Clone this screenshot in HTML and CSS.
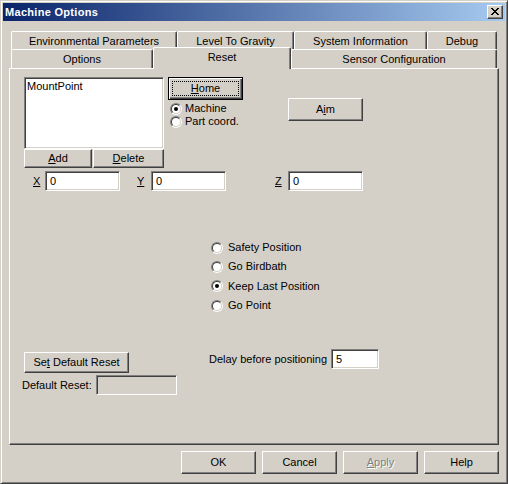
FILE: index.html
```html
<!DOCTYPE html>
<html>
<head>
<meta charset="utf-8">
<title>Machine Options</title>
<link rel="stylesheet" href="styles.css">
</head>
<body>
<div class="window">
  <div class="titlebar">
    <span class="title">Machine Options</span>
    <span class="close"><svg width="8" height="7" viewBox="0 0 8 7" shape-rendering="crispEdges"><path d="M0 0h2v1H0zM6 0h2v1H6zM1 1h2v1H1zM5 1h2v1H5zM2 2h4v1H2zM3 3h2v1H3zM2 4h4v1H2zM1 5h2v1H1zM5 5h2v1H5zM0 6h2v1H0zM6 6h2v1H6z" fill="#000"/></svg></span>
  </div>

  <div class="tabs">
    <div class="tabrow back">
      <div class="tab t-env">Environmental Parameters</div>
      <div class="tab t-level">Level To Gravity</div>
      <div class="tab t-sys">System Information</div>
      <div class="tab t-debug">Debug</div>
    </div>
    <div class="tabrow front">
      <div class="tab t-opt">Options</div>
      <div class="tab sel t-reset">Reset</div>
      <div class="tab t-sensor">Sensor Configuration</div>
    </div>
  </div>

  <div class="panel">
    <div class="top">
      <div class="col-list">
        <div class="listbox"><div class="item">MountPoint</div></div>
        <div class="listbtns">
          <button class="btn add"><span><u>A</u>dd</span></button>
          <button class="btn del"><span><u>D</u>elete</span></button>
        </div>
      </div>
      <div class="col-home">
        <button class="btn default home"><span class="focus"><span><u>H</u>ome</span></span></button>
        <div class="coord">
          <div class="crow"><span class="radio on"><i></i></span><span>Machine</span></div>
          <div class="crow"><span class="radio"><i></i></span><span>Part coord.</span></div>
        </div>
      </div>
      <div class="col-aim">
        <button class="btn aim"><span>A<u>i</u>m</span></button>
      </div>
    </div>

    <div class="xyz">
      <span class="lbl lbl-x"><u>X</u></span><input class="field fxyz" type="text" value="0">
      <span class="lbl lbl-y"><u>Y</u></span><input class="field fxyz" type="text" value="0">
      <span class="lbl lbl-z"><u>Z</u></span><input class="field fxyz" type="text" value="0">
    </div>

    <div class="positions">
      <div class="prow"><span class="radio"><i></i></span><span>Safety Position</span></div>
      <div class="prow"><span class="radio"><i></i></span><span>Go Birdbath</span></div>
      <div class="prow"><span class="radio on"><i></i></span><span>Keep Last Position</span></div>
      <div class="prow"><span class="radio"><i></i></span><span>Go Point</span></div>
    </div>

    <div class="bottom">
      <div class="bleft">
        <button class="btn sdr"><span>Se<u>t</u> Default Reset</span></button>
        <div class="drrow">
          <span class="drlbl">Default Reset:</span>
          <input class="field drfield" type="text" value="" disabled>
        </div>
      </div>
      <div class="delay">
        <span class="delaylbl">Delay before positioning</span>
        <input class="field delayfield" type="text" value="5">
      </div>
    </div>
  </div>

  <div class="actions">
    <button class="btn act"><span>OK</span></button>
    <button class="btn act"><span>Cancel</span></button>
    <button class="btn act disabled"><span><u>A</u>pply</span></button>
    <button class="btn act"><span>Help</span></button>
  </div>
</div>
</body>
</html>
```
FILE: styles.css
```css
html, body {
  margin: 0;
  padding: 0;
}
body {
  background: #d4d0c8;
  font-family: "Liberation Sans", Arial, sans-serif;
  font-size: 11px;
  line-height: 13px;
  color: #000;
}

.window {
  width: 508px;
  height: 484px;
  box-sizing: border-box;
  border: 1px solid;
  border-color: #d4d0c8 #404040 #404040 #d4d0c8;
  box-shadow: inset 1px 1px #fff, inset -1px -1px #808080;
  padding: 2px;
  background: #d4d0c8;
}

.titlebar {
  height: 18px;
  background: linear-gradient(90deg, #0a246a, #a6caf0);
  display: flex;
  align-items: center;
  justify-content: space-between;
  padding: 0 2px 0 2px;
}
.title {
  color: #fff;
  font-weight: bold;
  font-size: 11px;
  letter-spacing: 0.3px;
}
.close {
  width: 16px;
  height: 14px;
  box-sizing: border-box;
  border: 1px solid;
  border-color: #fff #404040 #404040 #fff;
  box-shadow: inset -1px -1px #808080;
  background: #d4d0c8;
  display: flex;
  align-items: center;
  justify-content: center;
  padding: 0 1px 1px 0;
}
.close svg { display: block; }

/* tabs */
.tabs {
  margin: 10px 0 0 8px;
}
.tabrow {
  display: flex;
}
.tabrow.back { height: 18px; }
.tabrow.front { height: 19px; align-items: flex-end; }
.tab {
  box-sizing: border-box;
  height: 100%;
  border-left: 1px solid #fff;
  border-top: 1px solid #fff;
  border-right: 1px solid #404040;
  box-shadow: inset -1px 0 #808080;
  border-top-left-radius: 2px;
  border-top-right-radius: 2px;
  background: #d4d0c8;
  display: flex;
  align-items: center;
  justify-content: center;
  white-space: nowrap;
  padding-top: 1px;
}
.tab.sel {
  height: 22px;
  margin-bottom: -1px;
  position: relative;
  z-index: 1;
  padding-top: 0;
  padding-bottom: 2px;
}
.t-env { width: 166px; }
.t-level { width: 117px; }
.t-sys { width: 133px; }
.t-debug { width: 70px; }
.t-opt { width: 142px; }
.t-reset { width: 138px; }
.t-sensor { width: 206px; }

/* panel */
.panel {
  margin: 0 6px;
  height: 377px;
  box-sizing: border-box;
  border: 1px solid;
  border-color: #fff #404040 #404040 #fff;
  box-shadow: inset -1px -1px #808080;
}

/* buttons */
.btn {
  box-sizing: border-box;
  border: 1px solid;
  border-color: #fff #404040 #404040 #fff;
  box-shadow: inset -1px -1px #808080;
  background: #d4d0c8;
  font: inherit;
  color: #000;
  padding: 0;
  margin: 0;
  display: flex;
  align-items: center;
  justify-content: center;
  cursor: default;
}
.btn.default {
  border-color: #000;
  box-shadow: inset 1px 1px #fff, inset -1px -1px #404040, inset -2px -2px #808080;
  padding: 3px;
  align-items: stretch;
}
.focus {
  flex: 1;
  border: 1px dotted #000;
  display: flex;
  align-items: center;
  justify-content: center;
}
.btn.disabled {
  color: #808080;
  text-shadow: 1px 1px 0 #fff;
}

/* fields */
.field {
  box-sizing: border-box;
  border: 1px solid;
  border-color: #808080 #fff #fff #808080;
  box-shadow: inset 1px 1px #404040, inset -1px -1px #d4d0c8;
  background: #fff;
  font: inherit;
  color: #000;
  padding: 0 4px;
  margin: 0;
  height: 20px;
  outline: none;
}
.field:disabled {
  background: #d4d0c8;
}

/* radios */
.radio {
  width: 12px;
  height: 12px;
  box-sizing: border-box;
  border-radius: 50%;
  border: 1px solid;
  border-color: #808080 #fff #fff #808080;
  flex: none;
}
.radio > i {
  display: flex;
  width: 10px;
  height: 10px;
  box-sizing: border-box;
  border-radius: 50%;
  border: 1px solid;
  border-color: #404040 #d4d0c8 #d4d0c8 #404040;
  background: #fff;
  align-items: center;
  justify-content: center;
}
.radio.on > i::after {
  content: "";
  width: 4px;
  height: 4px;
  border-radius: 50%;
  background: #000;
}

/* top section */
.top {
  display: flex;
  margin: 8px 0 0 14px;
}
.col-list { width: 140px; }
.listbox {
  height: 72px;
  box-sizing: border-box;
  border: 1px solid;
  border-color: #808080 #fff #fff #808080;
  box-shadow: inset 1px 1px #404040, inset -1px -1px #d4d0c8;
  background: #fff;
  padding: 2px 2px;
}
.listbtns {
  display: flex;
  gap: 1px;
}
.add { width: 68px; height: 19px; }
.del { width: 71px; height: 19px; }

.col-home { margin-left: 4px; }
.home { width: 75px; height: 23px; }
.coord { margin: 2px 0 0 2px; }
.crow {
  height: 13px;
  display: flex;
  align-items: center;
  gap: 3px;
}

.col-aim { margin: 21px 0 0 45px; }
.aim { width: 75px; height: 23px; }

/* xyz */
.xyz {
  display: flex;
  align-items: center;
  margin: 3px 0 0 23px;
}
.lbl { display: block; }
.lbl-x { width: 12px; }
.lbl-y { width: 14px; margin-left: 17px; }
.lbl-z { width: 13px; margin-left: 49px; }
.fxyz { width: 75px; }

/* positions */
.positions {
  margin: 47px 0 0 201px;
  height: 78px;
}
.prow {
  height: 19.33px;
  display: flex;
  align-items: center;
  gap: 5px;
}

/* bottom */
.bottom {
  display: flex;
  align-items: flex-start;
  margin-top: 33px;
}
.bleft {
  margin-left: 14px;
  width: 185px;
}
.sdr {
  width: 105px;
  height: 21px;
  margin-top: 3px;
}
.drrow {
  display: flex;
  align-items: center;
  margin: 2px 0 0 -2px;
}
.drlbl { width: 74px; }
.drfield { width: 81px; }
.delay {
  display: flex;
  align-items: center;
}
.delaylbl { width: 122px; }
.delayfield { width: 48px; }

/* dialog buttons */
.actions {
  display: flex;
  justify-content: flex-end;
  gap: 6px;
  margin-top: 6px;
  padding-right: 6px;
}
.act { width: 75px; height: 23px; }
```
